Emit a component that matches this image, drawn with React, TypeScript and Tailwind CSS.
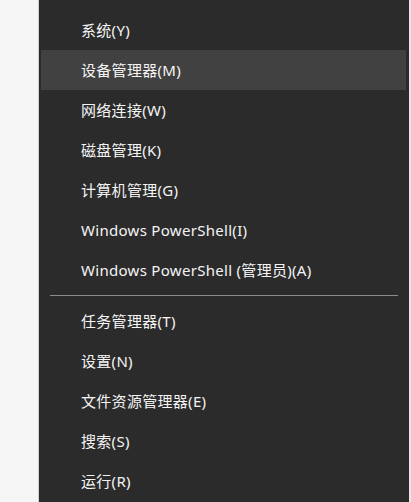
const items: (string | null)[] = [
  "系统(Y)",
  "设备管理器(M)",
  "网络连接(W)",
  "磁盘管理(K)",
  "计算机管理(G)",
  "Windows PowerShell(I)",
  "Windows PowerShell (管理员)(A)",
  null,
  "任务管理器(T)",
  "设置(N)",
  "文件资源管理器(E)",
  "搜索(S)",
  "运行(R)",
];

export default function App() {
  return (
    <div
      className="flex h-[502px] w-[411px] overflow-hidden bg-[#f6f6f6]"
      style={{ fontFamily: '"Noto Sans", "Noto Sans CJK SC", sans-serif' }}
    >
      <div className="w-[39px] shrink-0 border-r border-[#cfcfcf] bg-[#f6f6f6]" />
      <div className="flex w-[370px] shrink-0 flex-col bg-[#2b2b2b] pt-[10px] pl-[2px] pr-[3px]">
        {items.map((item, i) =>
          item === null ? (
            <div key={i} className="flex h-[11px] items-center pl-[9px] pr-[8px]">
              <div className="h-px w-full bg-[#8c8c8c]" />
            </div>
          ) : (
            <div
              key={i}
              className={`flex h-[40px] shrink-0 items-center pl-[40px] text-[15px] tracking-[0.3px] text-[#f4f4f4] ${
                i === 1 ? "bg-[#414141]" : ""
              }`}
            >
              {item}
            </div>
          )
        )}
      </div>
      <div className="w-[2px] shrink-0 bg-[#e6e6e6]" />
    </div>
  );
}
